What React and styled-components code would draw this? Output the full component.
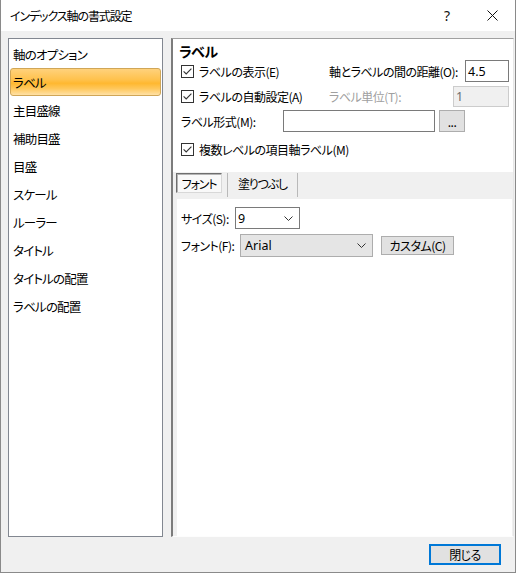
import React from "react";
import styled, { createGlobalStyle, css } from "styled-components";

const GlobalStyle = createGlobalStyle`
  html, body { margin: 0; padding: 0; background: #3b2c3a; }
  body {
    font-family: "Noto Sans CJK JP", "Noto Sans", sans-serif;
    font-size: 12px;
    color: #000;
  }
  * { box-sizing: border-box; }
`;

const Window = styled.div`
  width: 516px;
  height: 573px;
  border: 1px solid #8a8a8a;
  border-top: none;
  background: #f0f0f0;
  display: flex;
  flex-direction: column;
  font-feature-settings: "palt";
  letter-spacing: -0.5px;
`;

const TitleBar = styled.div`
  height: 31px;
  background: #fff;
  display: flex;
  align-items: center;
  padding-left: 9px;
`;

const TitleText = styled.div`
  flex: 1;
  font-size: 12px;
  letter-spacing: -1.1px;
`;

const CaptionButton = styled.div`
  width: ${(p) => p.$w}px;
  height: 31px;
  display: flex;
  align-items: center;
  justify-content: center;
  font-family: "Noto Sans", sans-serif;
  font-size: 14px;
  letter-spacing: 0;
  color: #111;
`;

const Body = styled.div`
  flex: 1;
  display: flex;
  gap: 8px;
  padding: 7px 1px 0 7px;
  min-height: 0;
`;

const NavList = styled.div`
  width: 155px;
  background: #fff;
  border: 1px solid #828790;
  padding: 1px;
  display: flex;
  flex-direction: column;
`;

const NavItem = styled.div`
  height: 28px;
  display: flex;
  align-items: center;
  padding-left: 2px;
  border: 1px solid transparent;
  border-radius: 3px;
  font-size: 12.5px;
  letter-spacing: -0.8px;
  white-space: nowrap;
  ${(p) =>
    p.$selected &&
    css`
      border-color: #d0a657;
      background: linear-gradient(
        to bottom,
        #ffd27c 0%,
        #ffc24e 40%,
        #ffb830 55%,
        #ffc75a 75%,
        #ffe1a6 100%
      );
    `}
`;

const Panel = styled.div`
  flex: 1;
  display: flex;
  flex-direction: column;
  border-top: 1px solid #a0a0a0;
  border-left: 2px solid #7c7c7c;
  border-right: 1px solid #e6e6e6;
  border-bottom: 1px solid #fdfdfd;
`;

const TopSection = styled.div`
  height: 133px;
  background: #fff;
  padding: 4px 4px 0 8px;
  display: flex;
  flex-direction: column;
`;

const Heading = styled.div`
  height: 17px;
  line-height: 17px;
  margin-left: -2px;
  font-weight: bold;
  font-size: 14px;
  letter-spacing: -0.6px;
`;

const Row = styled.div`
  height: ${(p) => p.$h || 22}px;
  margin-top: ${(p) => p.$mt || 0}px;
  display: flex;
  align-items: center;
  white-space: nowrap;
`;

const LeftCell = styled.div`
  width: ${(p) => p.$w}px;
  flex-shrink: 0;
  display: flex;
  align-items: center;
`;

const Label = styled.span`
  color: ${(p) => (p.$disabled ? "#a0a0a0" : "#000")};
`;

const CheckWrap = styled.span`
  display: inline-flex;
  width: 13px;
  height: 13px;
  margin-right: 5px;
`;

const TextBox = styled.div`
  width: ${(p) => p.$w}px;
  flex-shrink: 0;
  height: ${(p) => p.$h || 22}px;
  margin-left: ${(p) => (p.$auto ? "auto" : "0")};
  border: 1px solid ${(p) => (p.$disabled ? "#cccccc" : "#7a7a7a")};
  background: ${(p) => (p.$disabled ? "#f0f0f0" : "#fff")};
  color: ${(p) => (p.$disabled ? "#6d6d6d" : "#000")};
  font-family: "Noto Sans", sans-serif;
  font-size: 12.5px;
  letter-spacing: 0;
  display: flex;
  align-items: center;
  padding-left: 2px;
`;

const Button = styled.div`
  width: ${(p) => p.$w}px;
  height: ${(p) => p.$h}px;
  flex-shrink: 0;
  margin-left: ${(p) => p.$ml || 0}px;
  background: #e1e1e1;
  border: ${(p) => (p.$default ? "2px solid #0078d7" : "1px solid #adadad")};
  display: flex;
  align-items: center;
  justify-content: center;
  font-size: 12px;
  white-space: nowrap;
`;

const TabStrip = styled.div`
  height: 27px;
  display: flex;
  align-items: flex-start;
  padding: 1px 0 0 3px;
`;

const Tab = styled.div`
  width: ${(p) => p.$w}px;
  height: ${(p) => (p.$active ? 20 : 24)}px;
  margin-left: ${(p) => p.$ml || 0}px;
  display: flex;
  justify-content: center;
  align-items: ${(p) => (p.$active ? "center" : "flex-start")};
  padding-top: ${(p) => (p.$active ? 0 : 2)}px;
  font-size: 12px;
  letter-spacing: -1.2px;
  ${(p) =>
    p.$active
      ? css`
          background: #f9f9f9;
          border: 1px solid;
          border-color: #6e6e6e #d8d8d8 #d8d8d8 #6e6e6e;
          box-shadow: inset 1px 1px 0 #b4b4b4;
        `
      : css`
          border-left: 1px solid #b9b9b9;
          border-right: 1px solid #b9b9b9;
        `}
`;

const TabContent = styled.div`
  flex: 1;
  margin: 0 1px 0 4px;
  background: #fff;
  padding: 8px 0 0 4px;
  display: flex;
  flex-direction: column;
`;

const Select = styled.div`
  width: ${(p) => p.$w}px;
  height: ${(p) => p.$h}px;
  flex-shrink: 0;
  border: 1px solid ${(p) => (p.$gray ? "#adadad" : "#7a7a7a")};
  background: ${(p) => (p.$gray ? "#e5e5e5" : "#fff")};
  display: flex;
  align-items: center;
  padding: 0 6px 0 ${(p) => (p.$gray ? 4 : 2)}px;
  font-family: "Noto Sans", sans-serif;
  font-size: 12.5px;
  letter-spacing: 0;
`;

const SelectValue = styled.span`
  flex: 1;
`;

const Footer = styled.div`
  height: 35px;
  display: flex;
  justify-content: flex-end;
  align-items: flex-start;
  padding: 7px 14px 0 0;
`;

function CheckBox() {
  return (
    <CheckWrap>
      <svg width="13" height="13" viewBox="0 0 13 13">
        <rect x="0.5" y="0.5" width="12" height="12" fill="#fff" stroke="#333" />
        <path d="M2.6 6.4 L5.2 9 L10.4 3.6" fill="none" stroke="#333" strokeWidth="1.1" />
      </svg>
    </CheckWrap>
  );
}

function Chevron() {
  return (
    <svg width="9" height="5" viewBox="0 0 9 5">
      <path d="M0.5 0.5 L4.5 4.5 L8.5 0.5" fill="none" stroke="#333" strokeWidth="1" />
    </svg>
  );
}

const navItems = [
  "軸のオプション",
  "ラベル",
  "主目盛線",
  "補助目盛",
  "目盛",
  "スケール",
  "ルーラー",
  "タイトル",
  "タイトルの配置",
  "ラベルの配置",
];

export default function App() {
  return (
    <>
      <GlobalStyle />
      <Window>
        <TitleBar>
          <TitleText>インデックス軸の書式設定</TitleText>
          <CaptionButton $w={44}>?</CaptionButton>
          <CaptionButton $w={46}>
            <svg width="11" height="11" viewBox="0 0 11 11">
              <path d="M0.5 0.5 L10.5 10.5 M10.5 0.5 L0.5 10.5" stroke="#111" strokeWidth="1" />
            </svg>
          </CaptionButton>
        </TitleBar>
        <Body>
          <NavList>
            {navItems.map((t, i) => (
              <NavItem key={t} $selected={i === 1}>
                {t}
              </NavItem>
            ))}
          </NavList>
          <Panel>
            <TopSection>
              <Heading>ラベル</Heading>
              <Row>
                <LeftCell $w={148}>
                  <CheckBox />
                  <Label>ラベルの表示(E)</Label>
                </LeftCell>
                <Label>軸とラベルの間の距離(O):</Label>
                <TextBox $w={44} $auto>4.5</TextBox>
              </Row>
              <Row $mt={3}>
                <LeftCell $w={148}>
                  <CheckBox />
                  <Label>ラベルの自動設定(A)</Label>
                </LeftCell>
                <Label $disabled>ラベル単位(T):</Label>
                <TextBox $w={56} $h={21} $auto $disabled>
                  1
                </TextBox>
              </Row>
              <Row $mt={3}>
                <LeftCell $w={102}>
                  <Label>ラベル形式(M):</Label>
                </LeftCell>
                <TextBox $w={152} />
                <Button $w={26} $h={22} $ml={4}>
                  ...
                </Button>
              </Row>
              <Row $mt={6}>
                <CheckBox />
                <Label>複数レベルの項目軸ラベル(M)</Label>
              </Row>
            </TopSection>
            <TabStrip>
              <Tab $active $w={46}>
                フォント
              </Tab>
              <Tab $ml={5} $w={71}>
                塗りつぶし
              </Tab>
            </TabStrip>
            <TabContent>
              <Row>
                <LeftCell $w={54}>
                  <Label>サイズ(S):</Label>
                </LeftCell>
                <Select $w={65} $h={22}>
                  <SelectValue>9</SelectValue>
                  <Chevron />
                </Select>
              </Row>
              <Row $mt={5} $h={23}>
                <LeftCell $w={59}>
                  <Label>フォント(F):</Label>
                </LeftCell>
                <Select $w={133} $h={23} $gray>
                  <SelectValue>Arial</SelectValue>
                  <Chevron />
                </Select>
                <Button $w={73} $h={19} $ml={8}>
                  カスタム(C)
                </Button>
              </Row>
            </TabContent>
          </Panel>
        </Body>
        <Footer>
          <Button $w={72} $h={21} $default>
            閉じる
          </Button>
        </Footer>
      </Window>
    </>
  );
}
